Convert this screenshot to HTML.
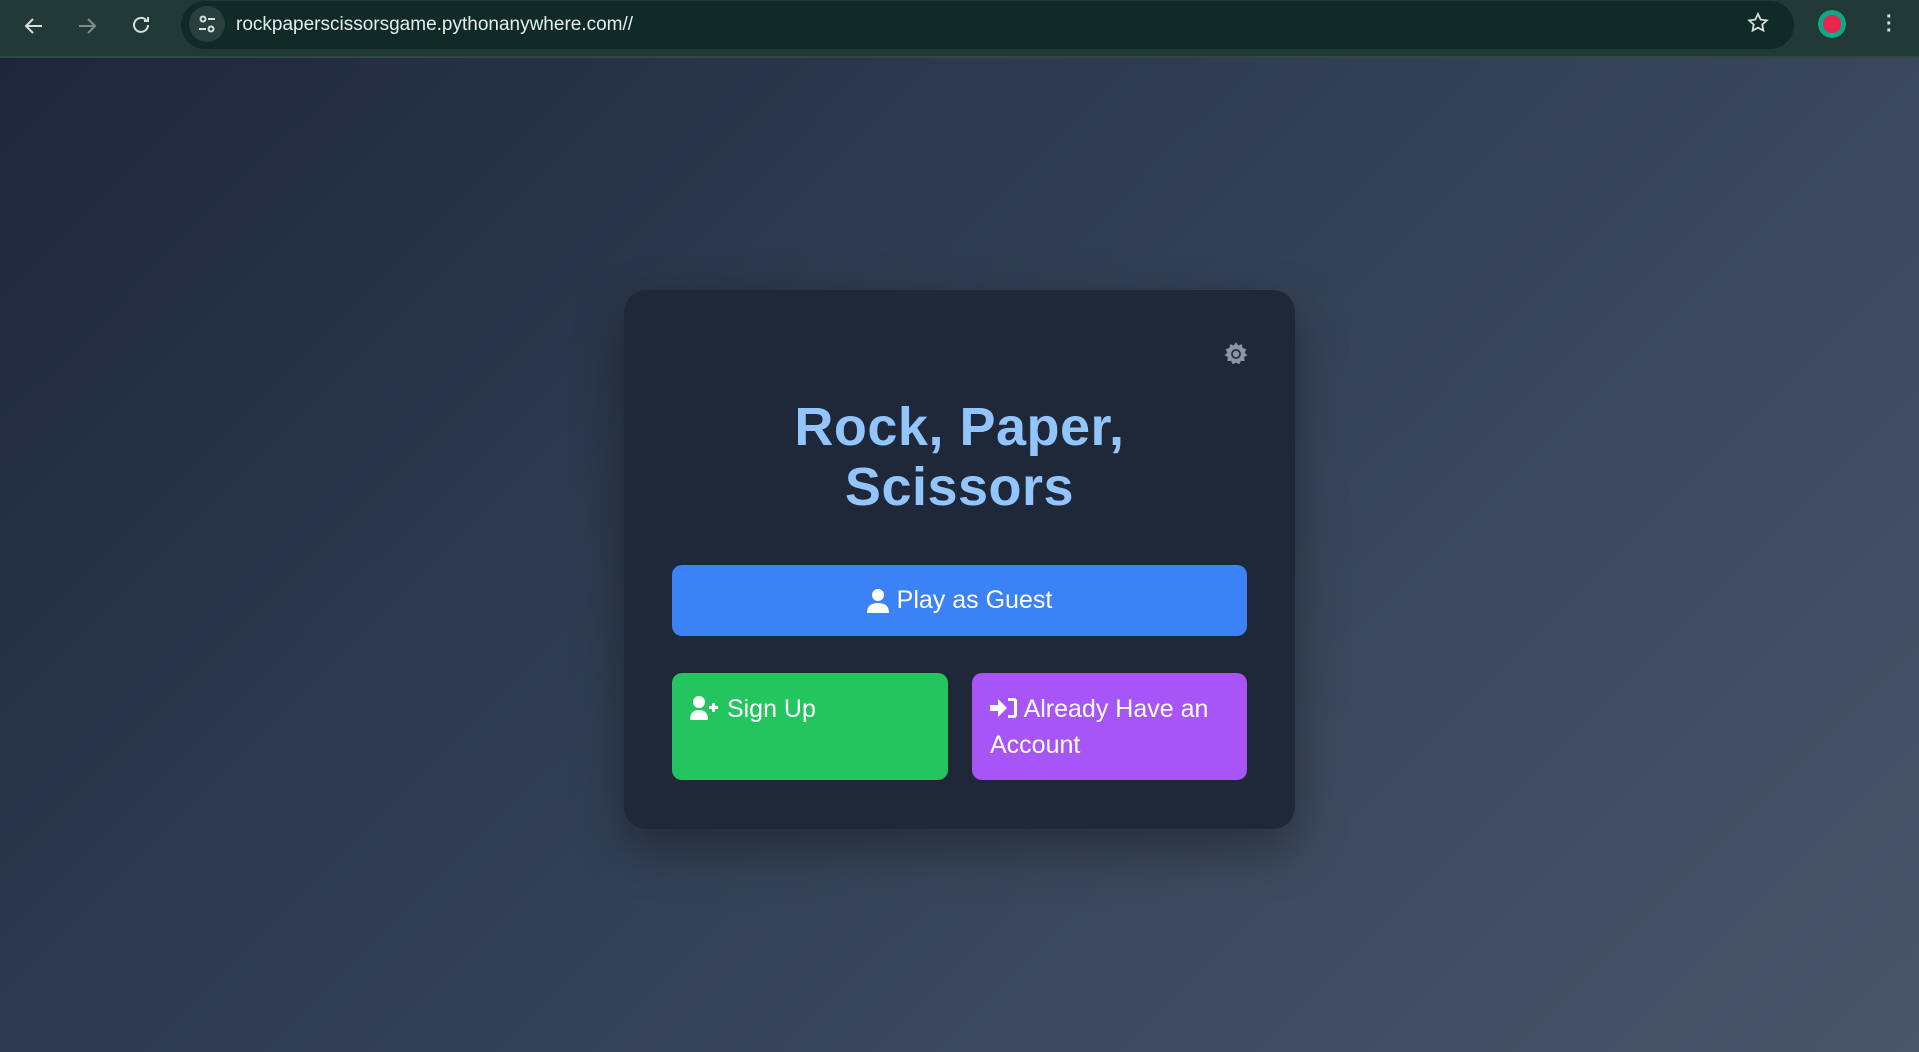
<!DOCTYPE html>
<html><head><meta charset="utf-8"><style>
*{box-sizing:border-box;margin:0;padding:0}
html,body{width:1919px;height:1052px;overflow:hidden;font-family:"Liberation Sans",sans-serif}
.top{position:absolute;left:0;top:0;width:1919px;height:58px;background:#223a36;border-bottom:2px solid #2f4a45}
.omni{position:absolute;left:181px;top:1px;width:1613px;height:48px;background:#102a27;border-radius:24px}
.url{position:absolute;left:236px;top:14px;color:#e6eeec;font-size:19px}
.page{position:absolute;left:0;top:58px;width:1919px;height:994px;background:linear-gradient(135deg,#1e2739 0%,#334155 50%,#4a5568 100%)}
.card{position:absolute;left:624px;top:290px;width:671px;height:539px;background:#1f2838;border-radius:22px;box-shadow:0 20px 50px rgba(0,0,0,.35)}
h1{position:absolute;left:0;width:100%;top:107px;text-align:center;color:#93c5fd;font-size:54px;line-height:60px;font-weight:bold;letter-spacing:0.5px}
.btn{position:absolute;border-radius:10px;color:#fff;font-size:25px}
.guest{left:48px;top:275px;width:575px;height:71px;background:#3b82f6;display:flex;align-items:center;justify-content:center;gap:8px}
.sign{left:48px;top:383px;width:276px;height:107px;background:#22c55e;padding:18px 18px}
.acc{left:348px;top:383px;width:275px;height:107px;background:#a855f7;padding:18px 18px;line-height:36px}
.sign{line-height:36px}
</style></head><body>
<div class="top">
<svg style="position:absolute;left:22px;top:14px" width="24" height="24" viewBox="0 0 24 24" fill="none" stroke="#d6e0de" stroke-width="2"><path d="M20 12H5M11 5l-7 7 7 7"/></svg>
<svg style="position:absolute;left:75px;top:14px" width="24" height="24" viewBox="0 0 24 24" fill="none" stroke="#7d8e8b" stroke-width="2"><path d="M4 12h15M13 5l7 7-7 7"/></svg>
<svg style="position:absolute;left:129px;top:13px" width="24" height="24" viewBox="0 0 24 24" fill="none" stroke="#d6e0de" stroke-width="2"><path d="M19 12a7 7 0 1 1-2-5M19 4v4h-4"/></svg>
<div class="omni"></div>
<div style="position:absolute;left:189px;top:6px;width:36px;height:36px;border-radius:50%;background:#2a403c"></div>
<svg style="position:absolute;left:196px;top:13px" width="22" height="22" viewBox="0 0 22 22" fill="none" stroke="#d6e0de" stroke-width="2"><circle cx="7" cy="6" r="2.5"/><path d="M12 6h7M3 16h7"/><circle cx="15" cy="16" r="2.5"/></svg>
<div class="url">rockpaperscissorsgame.pythonanywhere.com//</div>
<svg style="position:absolute;left:1746px;top:11px" width="24" height="24" viewBox="0 0 24 24" fill="none" stroke="#d6e0de" stroke-width="1.8"><path d="M12 3l2.7 5.6 6.1.8-4.5 4.2 1.1 6L12 16.7 6.6 19.6l1.1-6L3.2 9.4l6.1-.8z"/></svg>
<div style="position:absolute;left:1818px;top:10px;width:28px;height:28px;border-radius:50%;background:#0fa88a"></div>
<div style="position:absolute;left:1823px;top:15px;width:18px;height:18px;border-radius:50%;background:#e8254f"></div>
<div style="position:absolute;left:1886px;top:14px;color:#d6e0de;font-size:20px;line-height:7px;font-weight:bold">·<br>·<br>·</div>
</div>
<div class="page"></div>
<div class="card">
<svg style="position:absolute;left:599px;top:51px" width="26" height="26" viewBox="0 0 24 24"><path fill="#8a94a3" d="M12 1l2 3 3.5-1 .5 3.5 3.5 1-1.5 3.300 2.5 2.200-3 2 .5 3.500-3.500-.200L15 21.500 12 20l-3 1.500-1.500-3.200-3.500.200.500-3.500-3-2L4 10.800 2.500 7.500 6 6.500 6.500 3 10 4z"/><circle cx="12" cy="12" r="4.5" fill="#1f2838"/><circle cx="12" cy="12" r="3" fill="#8a94a3"/></svg>
<h1>Rock, Paper,<br>Scissors</h1>
<div class="btn guest"><svg width="22" height="24" viewBox="0 0 22 24" fill="#fff"><circle cx="11" cy="6" r="6"/><path d="M0 24c0-7 4-10 11-10s11 3 11 10z"/></svg><span>Play as Guest</span></div>
<div class="btn sign"><svg width="30" height="24" viewBox="0 0 30 24" fill="#fff" style="vertical-align:-3px"><circle cx="9" cy="6" r="6"/><path d="M0 24c0-7 3-10 9-10s9 3 9 10z"/><path d="M22 7h3v3h3v3h-3v3h-3v-3h-3v-3h3z"/></svg> Sign Up</div>
<div class="btn acc"><svg width="28" height="24" viewBox="0 0 28 24" fill="#fff" style="vertical-align:-3px"><path d="M0 9h8V3l9 9-9 9v-6H0z"/><path d="M18 2h6a3 3 0 0 1 3 3v14a3 3 0 0 1-3 3h-6v-3h6V5h-6z"/></svg> Already Have an Account</div>
</div>
</body></html>
